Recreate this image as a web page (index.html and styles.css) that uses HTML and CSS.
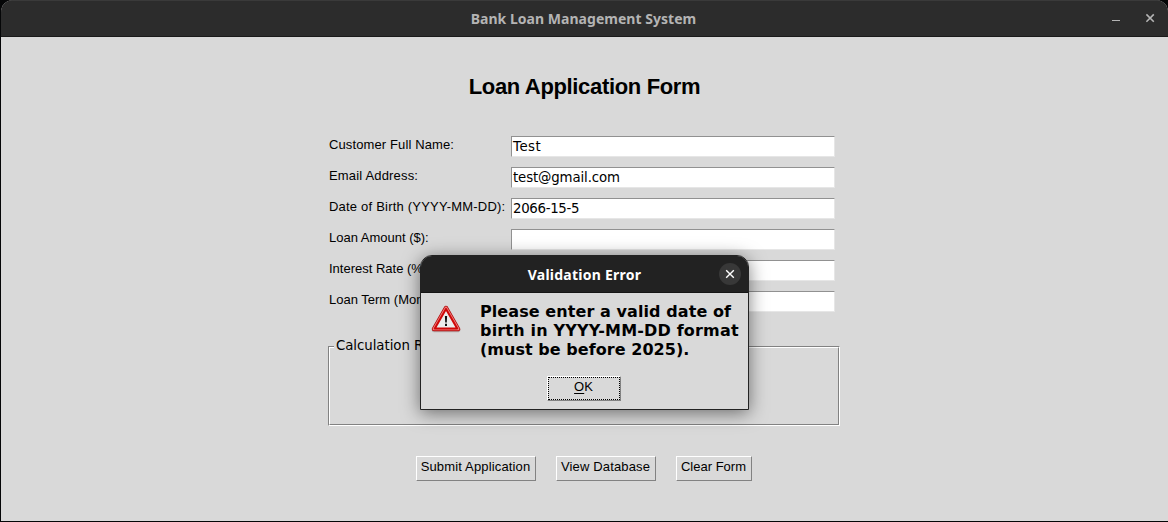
FILE: index.html
```html
<!DOCTYPE html>
<html lang="en">
<head>
<meta charset="utf-8">
<title>Bank Loan Management System</title>
<link rel="stylesheet" href="styles.css">
</head>
<body>
<div class="window">
  <header class="titlebar">
    <h1 class="window-title">Bank Loan Management System</h1>
    <div class="controls">
      <svg width="10" height="10" viewBox="0 0 10 10"><path d="M1 7.5h8" stroke="#b4b4b4"/></svg>
      <svg width="10" height="10" viewBox="0 0 10 10"><path d="M1.4 1.4l7.4 7.4M8.8 1.4L1.4 8.8" stroke="#b4b4b4" stroke-width="1.6"/></svg>
    </div>
  </header>
  <main class="content">
    <h2 class="heading">Loan Application Form</h2>
    <form class="form">
      <label class="label label-name">Customer Full Name:</label><div class="field field-name">Test</div>
      <label class="label label-email">Email Address:</label><div class="field field-email">test@gmail.com</div>
      <label class="label label-dob">Date of Birth (YYYY-MM-DD):</label><div class="field field-dob">2066-15-5</div>
      <label class="label">Loan Amount ($):</label><div class="field"></div>
      <label class="label">Interest Rate (%):</label><div class="field"></div>
      <label class="label">Loan Term (Months):</label><div class="field"></div>
    </form>
    <section class="results"><div class="results-frame"><span class="results-title">Calculation Results</span></div></section>
    <div class="actions">
      <div class="button submit">Submit Application</div>
      <div class="button view">View Database</div>
      <div class="button clear">Clear Form</div>
    </div>
  </main>
  <div class="dialog">
    <header class="dialog-bar">
      <span class="dialog-title">Validation Error</span>
      <span class="dialog-close"><svg width="22" height="22" viewBox="0 0 22 22"><path d="M7.2 7.2l7.6 7.6M14.8 7.2l-7.6 7.6" stroke="#fff" stroke-width="1.4"/></svg></span>
    </header>
    <div class="dialog-body">
      <svg class="warning" width="30" height="29" viewBox="0 0 30 29">
        <path d="M15 3.4L27 25H3z" fill="none" stroke="#999" stroke-width="4.5" stroke-linejoin="round" opacity=".65"/>
        <path d="M15 3L27 24H3z" fill="#eee" stroke="#b80d0d" stroke-width="4.5" stroke-linejoin="round"/>
        <path d="M15 3L27 24H3z" fill="none" stroke="#f08080" stroke-width="2.7" stroke-linejoin="round"/>
        <path d="M15 3.9L26.2 23.5H3.8z" fill="#ececec" stroke="#cf0808" stroke-width="2" stroke-linejoin="round"/>
        <path d="M13.9 11h2.2l-.3 6.5h-1.6zM14 18.8h2v2.2h-2z" fill="#111"/>
      </svg>
      <p class="message"><span class="line-one">Please enter a valid date of</span><br><span class="line-two">birth in YYYY-MM-DD format</span><br>(must be before 2025).</p>
      <div class="ok"><span class="ok-focus"><span class="key">O</span>K</span></div>
    </div>
  </div>
</div>
</body>
</html>
```
FILE: styles.css
```css
* { box-sizing: border-box; }
body { margin: 0; background: #050607; color: #000; font-family: "Liberation Sans", Arial, sans-serif; overflow: hidden; }
.window { position: relative; height: 521px; margin-left: 1px; background: #d9d9d9; border-radius: 12px 12px 0 0; overflow: hidden; }
.titlebar { position: relative; height: 37px; background: #2c2c2c; border-top: 1px solid #3a3a3a; border-bottom: 1px solid #1a1a1a; display: flex; justify-content: center; padding-right: 2px; }
.window-title { margin: 0; font: bold 14px/35px "Noto Sans", sans-serif; color: #b4b4b4; white-space: nowrap; letter-spacing: .03px; }
.controls { position: absolute; right: 13px; top: 12px; display: flex; gap: 24px; }
.content { padding-left: 327px; }
.heading { margin: 36px 0 0 -327px; font: bold 22px/28px "Liberation Sans", Arial, sans-serif; letter-spacing: -.34px; text-align: center; }
.form { display: grid; grid-template-columns: 182px 324px; row-gap: 10px; margin: 35px 0 0 1px; }
.label { font-size: 13px; line-height: 17px; white-space: nowrap; }
.label-name { letter-spacing: .12px; }
.label-email { letter-spacing: .17px; }
.label-dob { letter-spacing: .21px; }
.field { height: 21px; background: #fff; border: 1px solid; border-color: #919191 #e6e6e6 #e6e6e6 #919191; padding-left: 1px; font: 13.33px/19px "DejaVu Sans", sans-serif; }
.field-name { letter-spacing: .5px; }
.field-email { letter-spacing: -.13px; }
.field-dob { letter-spacing: -.32px; }
.results { width: 512px; height: 80px; margin-top: 34px; border: 1px solid; border-color: #828282 #fff #fff #828282; }
.results-frame { height: 78px; border: 1px solid; border-color: #fff #828282 #828282 #fff; padding-left: 4px; }
.results-title { display: block; width: max-content; margin-top: -11px; padding: 0 2px; background: #d9d9d9; font: 13.33px/18px "DejaVu Sans", sans-serif; letter-spacing: -.05px; }
.actions { display: flex; gap: 20px; margin: 30px 0 0 88px; }
.button { height: 25px; border: 1px solid; border-color: #fff #828282 #828282 #fff; font-size: 13px; line-height: 20px; text-align: center; white-space: nowrap; }
.submit { width: 120px; letter-spacing: .15px; padding-right: 1px; }
.view { width: 100px; letter-spacing: .15px; padding-right: 1px; }
.clear { width: 76px; padding-right: 1px; }
.dialog { position: absolute; left: 419px; top: 255px; width: 329px; height: 155px; background: #d9d9d9; border: 1px solid #222; border-radius: 12px 12px 0 0; box-shadow: 0 3px 18px rgba(0,0,0,.5); }
.dialog-bar { position: relative; height: 37px; background: #222; border-radius: 11px 11px 0 0; border-bottom: 1px solid #151515; display: flex; justify-content: center; }
.dialog-title { font: bold 14px/38px "Noto Sans", sans-serif; color: #fff; letter-spacing: .25px; }
.dialog-close { position: absolute; right: 7px; top: 7px; width: 22px; height: 22px; border-radius: 50%; background: #383838; }
.dialog-close svg, .controls svg { display: block; }
.dialog-body { display: grid; grid-template-columns: 49px 1fr; padding: 10px 0 0 10px; }
.warning { margin-top: 2px; }
.message { margin: -1px 0 0; font: bold 16px/19px "DejaVu Sans", sans-serif; white-space: nowrap; letter-spacing: .04px; }
.line-one { letter-spacing: .08px; }
.line-two { letter-spacing: .18px; }
.ok { grid-column: 1 / 3; width: 74px; height: 25px; margin: 17px 0 0 116px; border: 1px solid; border-color: #fff #828282 #828282 #fff; }
.ok-focus { display: block; height: 23px; border: 1px dotted #000; font-size: 13px; line-height: 17px; text-align: center; padding-right: 1px; }
.key { text-decoration: underline; text-underline-offset: 2px; }
```
